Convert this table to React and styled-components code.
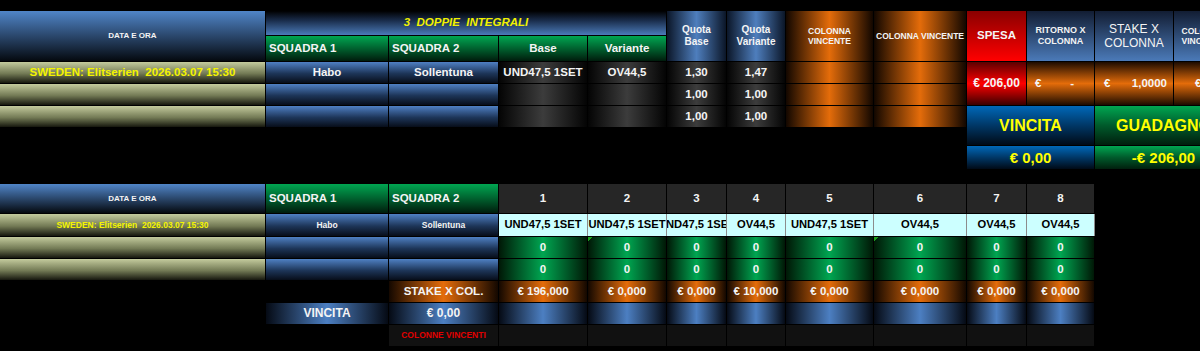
import React from 'react';
import styled, { createGlobalStyle } from 'styled-components';

const GlobalStyle = createGlobalStyle`
  html, body {
    margin: 0;
    padding: 0;
    background: #000;
    overflow: hidden;
  }
  body {
    font-family: "Liberation Sans", Arial, sans-serif;
  }
`;

const Page = styled.div`
  width: 1200px;
  height: 351px;
  box-sizing: border-box;
  padding-top: 11px;
  overflow: hidden;
  background: #000;
`;

const Sheet = styled.div`
  display: grid;
  grid-template-columns: 265px 122px 109px 88px 78px 59px 58px 87px 92px 59px 67px 78px 58px;
  grid-template-rows: ${p => p.$rows};
  gap: 1px;
  width: 1232px;
  margin-top: ${p => p.$top || 0}px;
`;

const Cell = styled.div`
  grid-column: ${p => p.$col} / span ${p => p.$w || 1};
  grid-row: ${p => p.$row} / span ${p => p.$h || 1};
  min-width: 0;
  display: flex;
  align-items: center;
  justify-content: ${p => p.$align || 'center'};
  padding: 0 ${p => p.$pad || 0}px;
  overflow: hidden;
  white-space: pre;
  font-size: ${p => p.$size || 11.5}px;
  font-weight: ${p => (p.$thin ? 'normal' : 'bold')};
  line-height: 1.2;
  color: ${p => p.$color || '#f4f4f4'};
`;

const Label = styled.span`
  text-align: center;
`;

const DateHead = styled(Cell)`
  background: linear-gradient(180deg, #5085c8 0%, #05090f 100%);
`;

const Title = styled(Cell)`
  background: linear-gradient(180deg, #000 0%, #1a2d4c 40%, #4b7bb9 100%);
  color: #f2f200;
  font-style: italic;
`;

const GreenHead = styled(Cell)`
  background: linear-gradient(180deg, #00a651 0%, #001c0c 100%);
`;

const QuotaHead = styled(Cell)`
  background: linear-gradient(90deg, #0b1628 0%, #4e7ebd 50%, #0b1628 100%);
`;

const OrangeCol = styled(Cell)`
  background: linear-gradient(90deg, #120700 0%, #e46c0a 50%, #120700 100%);
`;

const SpesaHead = styled(Cell)`
  background: linear-gradient(180deg, #8a0000 0%, #ff0000 100%);
`;

const SideHead = styled(Cell)`
  background: linear-gradient(180deg, #121d33 0%, #4b7ab8 100%);
`;

const Event = styled(Cell)`
  background: linear-gradient(180deg, #c4cb9d 0%, #737a55 55%, #16170e 100%);
  color: #f4f400;
`;

const Team = styled(Cell)`
  background: linear-gradient(180deg, #4f80c3 0%, #1d3558 55%, #070d19 100%);
`;

const Odds = styled(Cell)`
  background: linear-gradient(90deg, #040404 0%, #3c3c3c 50%, #040404 100%);
`;

const SpesaValue = styled(Cell)`
  background: linear-gradient(180deg, #5c0000 0%, #ff0000 50%, #3a0000 100%);
`;

const Money = styled(Cell)`
  justify-content: space-between;
  padding: 0 ${p => p.$right || 6}px 0 ${p => p.$left || 8}px;
  background: linear-gradient(180deg, #1c0b00 0%, #e46c0a 50%, #1c0b00 100%);
`;

const Vincita = styled(Cell)`
  background: linear-gradient(180deg, #0068b8 0%, #003766 50%, #000a16 100%);
  color: #ffff00;
`;

const Guadagno = styled(Cell)`
  background: linear-gradient(180deg, #00a651 0%, #005a2b 50%, #001f0d 100%);
  color: #ffff00;
`;

const NumHead = styled(Cell)`
  background: #262626;
`;

const Pick = styled(Cell)`
  background: #ccffff;
  color: #000;
  font-size: 11.2px;
  box-shadow: 1px 0 0 #8c8c8c;
`;

const Hits = styled(Cell)`
  background: ${p => (p.$flag ? 'linear-gradient(135deg, #1aa01a 0 3px, transparent 3px), ' : '')}
    linear-gradient(90deg, #001806 0%, #00a651 50%, #001806 100%);
`;

const Stake = styled(Cell)`
  background: linear-gradient(90deg, #140800 0%, #e46c0a 50%, #140800 100%);
`;

const BlueBand = styled(Cell)`
  background: linear-gradient(90deg, #050a14 0%, #4c7fc2 50%, #050a14 100%);
`;

const Blank = styled(Cell)`
  background: #111;
  color: #e00000;
`;

const event = 'SWEDEN: Elitserien  2026.03.07 15:30';
const picks = ['UND47,5 1SET', 'UND47,5 1SET', 'UND47,5 1SET', 'OV44,5', 'UND47,5 1SET', 'OV44,5', 'OV44,5', 'OV44,5'];
const stakes = ['€ 196,000', '€ 0,000', '€ 0,000', '€ 10,000', '€ 0,000', '€ 0,000', '€ 0,000', '€ 0,000'];
const quotes = [['1,30', '1,47'], ['1,00', '1,00'], ['1,00', '1,00']];

function Schedina() {
  return (
    <Sheet $rows="24px 25px 21px 21px 21px 17px 23px">
      <DateHead $col={1} $row={1} $h={2} $size={8}>DATA E ORA</DateHead>
      <Title $col={2} $row={1} $w={4} $size={11.5}>{'3  DOPPIE  INTEGRALI'}</Title>
      <GreenHead $col={2} $row={2} $align="flex-start" $pad={3}>SQUADRA 1</GreenHead>
      <GreenHead $col={3} $row={2} $align="flex-start" $pad={3}>SQUADRA 2</GreenHead>
      <GreenHead $col={4} $row={2}>Base</GreenHead>
      <GreenHead $col={5} $row={2}>Variante</GreenHead>
      <QuotaHead $col={6} $row={1} $h={2} $size={10}><Label>Quota<br />Base</Label></QuotaHead>
      <QuotaHead $col={7} $row={1} $h={2} $size={10}><Label>Quota<br />Variante</Label></QuotaHead>
      <OrangeCol $col={8} $row={1} $h={2} $size={8.5}><Label>COLONNA<br />VINCENTE</Label></OrangeCol>
      <OrangeCol $col={9} $row={1} $h={2} $size={8.5}>COLONNA VINCENTE</OrangeCol>
      <SpesaHead $col={10} $row={1} $h={2}>SPESA</SpesaHead>
      <SideHead $col={11} $row={1} $h={2} $size={9}><Label>RITORNO X<br />COLONNA</Label></SideHead>
      <SideHead $col={12} $row={1} $h={2} $size={12} $thin><Label>STAKE X<br />COLONNA</Label></SideHead>
      <SideHead $col={13} $row={1} $h={2} $size={8.5}><Label>COLONNA<br />VINCENTE</Label></SideHead>

      {quotes.map((q, i) => (
        <React.Fragment key={i}>
          <Event $col={1} $row={3 + i}>{i === 0 ? event : ''}</Event>
          <Team $col={2} $row={3 + i}>{i === 0 ? 'Habo' : ''}</Team>
          <Team $col={3} $row={3 + i}>{i === 0 ? 'Sollentuna' : ''}</Team>
          <Odds $col={4} $row={3 + i}>{i === 0 ? 'UND47,5 1SET' : ''}</Odds>
          <Odds $col={5} $row={3 + i}>{i === 0 ? 'OV44,5' : ''}</Odds>
          <Odds $col={6} $row={3 + i}>{q[0]}</Odds>
          <Odds $col={7} $row={3 + i}>{q[1]}</Odds>
          <OrangeCol $col={8} $row={3 + i} />
          <OrangeCol $col={9} $row={3 + i} />
        </React.Fragment>
      ))}

      <SpesaValue $col={10} $row={3} $h={2} $size={12}>€ 206,00</SpesaValue>
      <Money $col={11} $row={3} $h={2} $left={8} $right={20}><span>€</span><span>-</span></Money>
      <Money $col={12} $row={3} $h={2} $left={9} $right={6}><span>€</span><span>1,0000</span></Money>
      <Money $col={13} $row={3} $h={2} $left={21} $right={4}><span>€</span><span>-</span></Money>

      <Vincita $col={10} $row={5} $w={2} $h={2} $size={16}>VINCITA</Vincita>
      <Guadagno $col={12} $row={5} $w={2} $h={2} $size={16}>GUADAGNO</Guadagno>
      <Vincita $col={10} $row={7} $w={2} $size={15}>€ 0,00</Vincita>
      <Guadagno $col={12} $row={7} $w={2} $size={15}>-€ 206,00</Guadagno>
    </Sheet>
  );
}

function Colonne() {
  return (
    <Sheet $rows="29px 22px 21px 21px 21px 21px 21px" $top={15}>
      <DateHead $col={1} $row={1} $size={8}>DATA E ORA</DateHead>
      <GreenHead $col={2} $row={1} $align="flex-start" $pad={3}>SQUADRA 1</GreenHead>
      <GreenHead $col={3} $row={1} $align="flex-start" $pad={3}>SQUADRA 2</GreenHead>
      {picks.map((p, i) => (
        <NumHead key={'h' + i} $col={4 + i} $row={1}>{i + 1}</NumHead>
      ))}

      <Event $col={1} $row={2} $size={8.5}>{event}</Event>
      <Team $col={2} $row={2} $size={8.5}>Habo</Team>
      <Team $col={3} $row={2} $size={8.5}>Sollentuna</Team>
      {picks.map((p, i) => (
        <Pick key={'p' + i} $col={4 + i} $row={2}>{p}</Pick>
      ))}

      {[3, 4].map(r => (
        <React.Fragment key={r}>
          <Event $col={1} $row={r} />
          <Team $col={2} $row={r} />
          <Team $col={3} $row={r} />
          {picks.map((p, i) => (
            <Hits key={i} $col={4 + i} $row={r} $flag={r === 3 && (i === 1 || i === 5)}>0</Hits>
          ))}
        </React.Fragment>
      ))}

      <Stake $col={3} $row={5}>STAKE X COL.</Stake>
      {stakes.map((s, i) => (
        <Stake key={'s' + i} $col={4 + i} $row={5}>{s}</Stake>
      ))}

      <BlueBand $col={2} $row={6} $size={12}>VINCITA</BlueBand>
      <BlueBand $col={3} $row={6} $size={12}>€ 0,00</BlueBand>
      {picks.map((p, i) => (
        <BlueBand key={'b' + i} $col={4 + i} $row={6} />
      ))}

      <Blank $col={3} $row={7} $size={8.5}>COLONNE VINCENTI</Blank>
      {picks.map((p, i) => (
        <Blank key={'e' + i} $col={4 + i} $row={7} />
      ))}
    </Sheet>
  );
}

export default function App() {
  return (
    <Page>
      <GlobalStyle />
      <Schedina />
      <Colonne />
    </Page>
  );
}
